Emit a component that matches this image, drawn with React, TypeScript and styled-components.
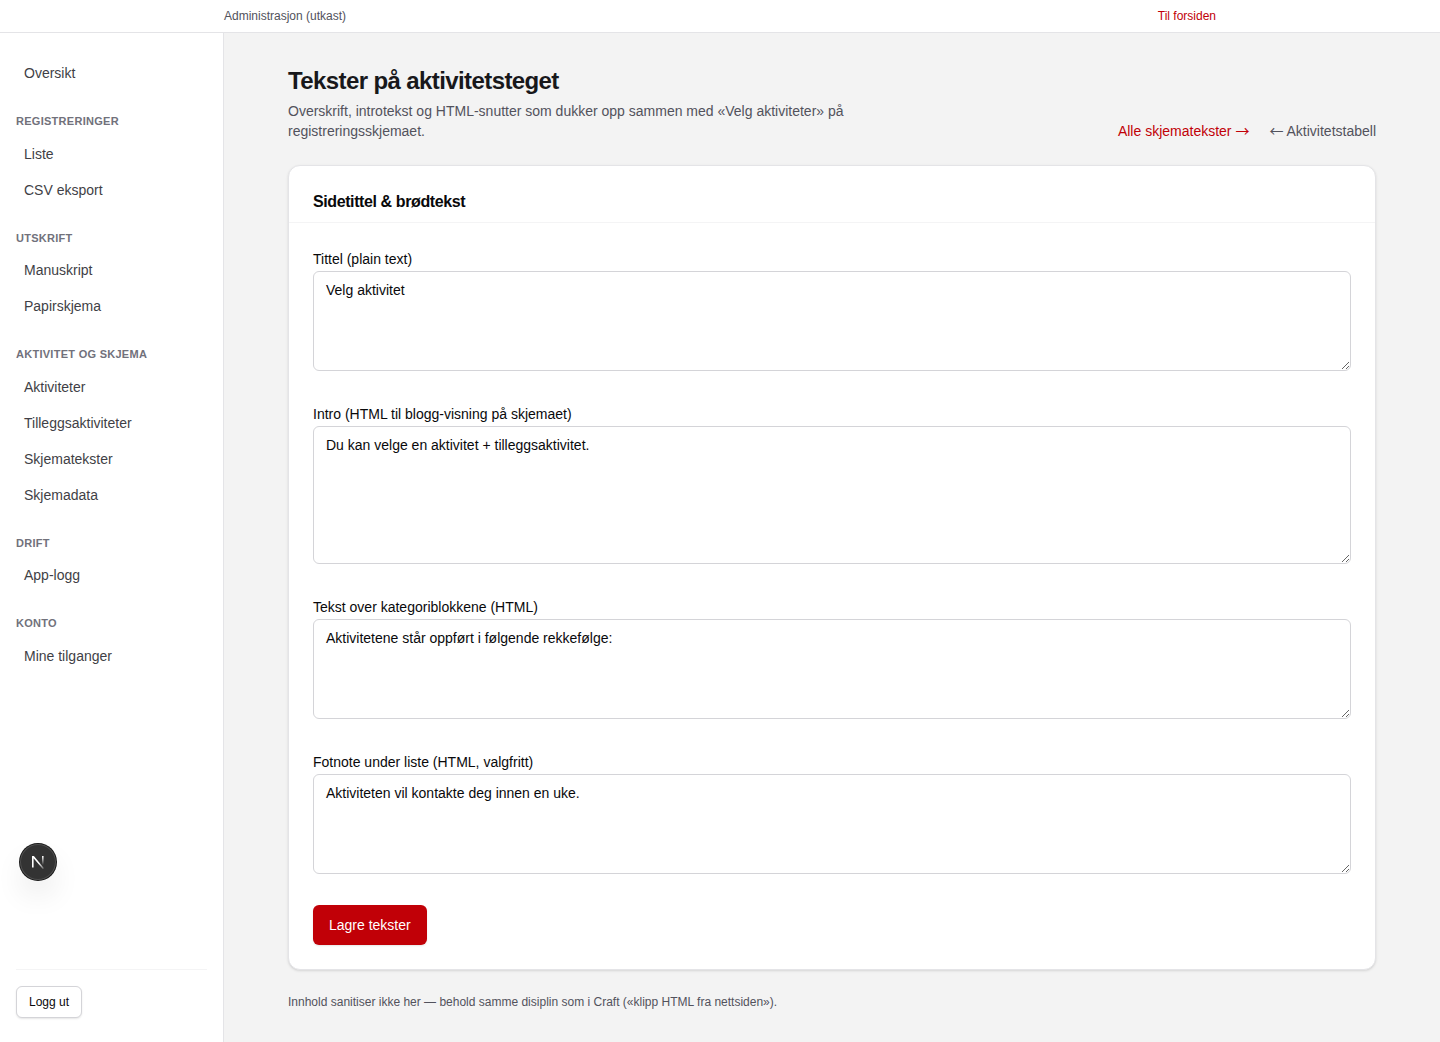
import React from "react";
import styled, { createGlobalStyle } from "styled-components";

const GlobalStyle = createGlobalStyle`
  *, *::before, *::after { box-sizing: border-box; }
  body {
    margin: 0;
    background: #f3f3f3;
    color: #09090b;
    font-family: "Liberation Sans", Arial, Helvetica, sans-serif;
    font-size: 14px;
    line-height: 20px;
  }
  h1, h2, p, ul { margin: 0; padding: 0; }
  ul { list-style: none; }
  a { color: inherit; text-decoration: none; }
  button, textarea { font: inherit; color: inherit; }
`;

const Page = styled.div`
  min-height: 100vh;
  display: flex;
  flex-direction: column;
`;

const TopBar = styled.header`
  background: #fff;
  border-bottom: 1px solid #e4e4e7;
  font-size: 12px;
  line-height: 16px;
  color: #52525c;
`;

const TopBarInner = styled.div`
  max-width: 1024px;
  margin: 0 auto;
  padding: 8px 16px;
  display: flex;
  justify-content: space-between;
`;

const TextLink = styled.a<{ $accent?: boolean }>`
  color: ${(p) => (p.$accent ? "#c10007" : "#52525c")};
`;

const Arrow = styled.span`
  font-family: "Noto Sans CJK JP", sans-serif;
  line-height: 1;
`;

const Columns = styled.div`
  flex: 1;
  display: flex;
`;

const Sidebar = styled.aside`
  flex: none;
  width: 224px;
  padding: 24px 16px;
  background: #fff;
  border-right: 1px solid #e4e4e7;
  display: flex;
  flex-direction: column;
  justify-content: space-between;
`;

const Nav = styled.nav`
  display: flex;
  flex-direction: column;
  gap: 24px;
`;

const NavGroup = styled.div`
  display: flex;
  flex-direction: column;
  gap: 8px;
`;

const NavHeading = styled.p`
  font-size: 11px;
  line-height: 1.5;
  font-weight: 700;
  letter-spacing: 0.025em;
  text-transform: uppercase;
  color: #71717b;
`;

const NavList = styled.ul`
  display: flex;
  flex-direction: column;
  gap: 4px;
`;

const NavLink = styled.a`
  display: block;
  padding: 6px 8px;
  color: #3f3f46;
`;

const SidebarFooter = styled.div`
  padding-top: 16px;
  border-top: 1px solid #f4f4f5;
`;

const LogoutButton = styled.button`
  display: block;
  height: 32px;
  padding: 0 12px;
  font-size: 12px;
  line-height: 16px;
  background: #fff;
  border: 1px solid #d4d4d8;
  border-radius: 6px;
  box-shadow: 0 1px 2px rgba(0, 0, 0, 0.1);
`;

const Main = styled.main`
  flex: 1;
  min-width: 0;
  padding: 32px 64px;
  display: flex;
  flex-direction: column;
  gap: 24px;
`;

const PageHeader = styled.div`
  display: flex;
  align-items: flex-end;
  justify-content: space-between;
  gap: 16px;
`;

const PageTitle = styled.h1`
  font-size: 24px;
  line-height: 32px;
  font-weight: 700;
  letter-spacing: -0.025em;
  color: #18181b;
`;

const Lead = styled.p`
  max-width: 576px;
  margin-top: 4px;
  color: #52525c;
`;

const HeaderLinks = styled.div`
  display: flex;
  gap: 20px;
`;

const Card = styled.section`
  background: #fff;
  border: 1px solid #e4e4e7;
  border-radius: 12px;
  box-shadow: 0 1px 3px rgba(0, 0, 0, 0.1), 0 1px 2px -1px rgba(0, 0, 0, 0.1);
`;

const CardHeader = styled.div`
  padding: 24px 24px 8px;
  border-bottom: 1px solid #f4f4f5;
`;

const CardTitle = styled.h2`
  font-size: 16px;
  line-height: 24px;
  font-weight: 700;
  letter-spacing: -0.025em;
`;

const Form = styled.form`
  padding: 24px;
  display: flex;
  flex-direction: column;
  align-items: flex-start;
  gap: 31px;
`;

const Field = styled.div`
  width: 100%;
`;

const Label = styled.label`
  display: block;
  line-height: 24px;
`;

const TextArea = styled.textarea`
  display: block;
  width: 100%;
  min-height: 100px;
  padding: 8px 12px;
  background: #fff;
  border: 1px solid #d4d4d8;
  border-radius: 6px;
  resize: vertical;
`;

const SaveButton = styled.button`
  height: 40px;
  padding: 0 16px;
  background: #c10007;
  color: #fff;
  border: 0;
  border-radius: 6px;
  box-shadow: 0 1px 2px rgba(0, 0, 0, 0.1);
`;

const Note = styled.p`
  font-size: 12px;
  line-height: 16px;
  color: #52525c;
`;

const DevBadge = styled.button`
  position: absolute;
  left: 20px;
  top: 844px;
  width: 36px;
  height: 36px;
  padding: 0;
  display: grid;
  place-items: center;
  border: 0;
  border-radius: 50%;
  background: #333;
  box-shadow: 0 0 0 1px #171717, inset 0 0 0 1px rgba(255, 255, 255, 0.14),
    0 16px 32px -8px rgba(0, 0, 0, 0.24);
`;

const groups = [
  { heading: "", links: ["Oversikt"] },
  { heading: "Registreringer", links: ["Liste", "CSV eksport"] },
  { heading: "Utskrift", links: ["Manuskript", "Papirskjema"] },
  {
    heading: "Aktivitet og skjema",
    links: ["Aktiviteter", "Tilleggsaktiviteter", "Skjematekster", "Skjemadata"],
  },
  { heading: "Drift", links: ["App-logg"] },
  { heading: "Konto", links: ["Mine tilganger"] },
];

const fields = [
  { id: "title", label: "Tittel (plain text)", rows: 4, value: "Velg aktivitet" },
  {
    id: "intro",
    label: "Intro (HTML til blogg-visning på skjemaet)",
    rows: 6,
    value: "Du kan velge en aktivitet + tilleggsaktivitet.",
  },
  {
    id: "above",
    label: "Tekst over kategoriblokkene (HTML)",
    rows: 4,
    value: "Aktivitetene står oppført i følgende rekkefølge:",
  },
  {
    id: "footnote",
    label: "Fotnote under liste (HTML, valgfritt)",
    rows: 4,
    value: "Aktiviteten vil kontakte deg innen en uke.",
  },
];

function NextMark() {
  return (
    <svg width="14" height="14" viewBox="0 0 14 14" fill="none" aria-hidden="true">
      <defs>
        <linearGradient id="stem" x1="0" y1="1" x2="0" y2="10" gradientUnits="userSpaceOnUse">
          <stop stopColor="#fff" />
          <stop offset="1" stopColor="#fff" stopOpacity="0" />
        </linearGradient>
        <linearGradient id="diagonal" x1="8" y1="8" x2="13" y2="14" gradientUnits="userSpaceOnUse">
          <stop stopColor="#fff" />
          <stop offset="1" stopColor="#fff" stopOpacity="0.2" />
        </linearGradient>
      </defs>
      <path d="M1 1H2.9L13 13.2L11.8 14L2.6 3.2V12.6H1Z" fill="url(#diagonal)" />
      <path d="M11 1H12.6V10H11Z" fill="url(#stem)" />
    </svg>
  );
}

export default function App() {
  return (
    <Page>
      <GlobalStyle />
      <TopBar>
        <TopBarInner>
          <span>Administrasjon (utkast)</span>
          <TextLink $accent href="#forside">
            Til forsiden
          </TextLink>
        </TopBarInner>
      </TopBar>
      <Columns>
        <Sidebar>
          <Nav>
            {groups.map((group) => (
              <NavGroup key={group.heading}>
                {group.heading && <NavHeading>{group.heading}</NavHeading>}
                <NavList>
                  {group.links.map((link) => (
                    <li key={link}>
                      <NavLink href="#">{link}</NavLink>
                    </li>
                  ))}
                </NavList>
              </NavGroup>
            ))}
          </Nav>
          <SidebarFooter>
            <LogoutButton type="button">Logg ut</LogoutButton>
          </SidebarFooter>
        </Sidebar>
        <Main>
          <PageHeader>
            <div>
              <PageTitle>Tekster på aktivitetsteget</PageTitle>
              <Lead>
                Overskrift, introtekst og HTML-snutter som dukker opp sammen med «Velg aktiviteter»
                på registreringsskjemaet.
              </Lead>
            </div>
            <HeaderLinks>
              <TextLink $accent href="#skjematekster">
                Alle skjematekster <Arrow>→</Arrow>
              </TextLink>
              <TextLink href="#aktiviteter">
                <Arrow>←</Arrow> Aktivitetstabell
              </TextLink>
            </HeaderLinks>
          </PageHeader>
          <Card>
            <CardHeader>
              <CardTitle>Sidetittel &amp; brødtekst</CardTitle>
            </CardHeader>
            <Form onSubmit={(event) => event.preventDefault()}>
              {fields.map((field) => (
                <Field key={field.id}>
                  <Label htmlFor={field.id}>{field.label}</Label>
                  <TextArea id={field.id} rows={field.rows} defaultValue={field.value} />
                </Field>
              ))}
              <SaveButton type="submit">Lagre tekster</SaveButton>
            </Form>
          </Card>
          <Note>
            Innhold sanitiser ikke her — behold samme disiplin som i Craft («klipp HTML fra
            nettsiden»).
          </Note>
        </Main>
      </Columns>
      <DevBadge type="button" aria-label="Next.js">
        <NextMark />
      </DevBadge>
    </Page>
  );
}
